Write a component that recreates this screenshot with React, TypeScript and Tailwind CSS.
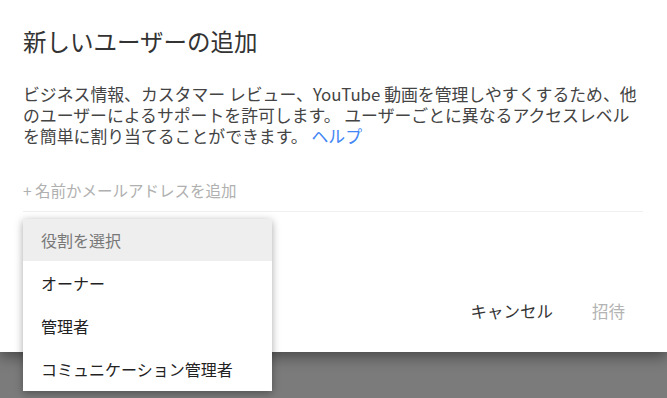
import React from "react";

export default function App() {
  const font = { fontFamily: "'Noto Sans CJK JP', 'Noto Sans', sans-serif" };
  return (
    <div className="relative h-[398px] w-[667px] overflow-hidden bg-[#7b7b7b]" style={font}>
      <div className="relative h-[352px] bg-white shadow-[0_4px_14px_rgba(0,0,0,0.45)]">
        <div className="pl-[23px] pr-[24px] pt-[24px]">
          <h1 className="text-[23.5px] leading-[34px] text-[#333] font-normal">新しいユーザーの追加</h1>
          <div className="mt-[25px] flex flex-col whitespace-nowrap text-[16.85px] leading-[21px] text-[#444]">
            <div className="h-[21px]">ビジネス情報、カスタマー レビュー、YouTube 動画を管理しやすくするため、他</div>
            <div className="h-[21px]">のユーザーによるサポートを許可します。 ユーザーごとに異なるアクセスレベル</div>
            <div className="h-[21px]">
              を簡単に割り当てることができます。 <span className="text-[#4285f4]">ヘルプ</span>
            </div>
          </div>
          <div className="mt-[34px] border-b border-[#efefef] pb-[11px] text-[15.5px] leading-[20px] text-[#b0b0b0]">
            + 名前かメールアドレスを追加
          </div>
        </div>
        <div className="mt-[88px] flex justify-end gap-[39px] pr-[42px] text-[16.5px] leading-[22px]">
          <span className="text-[#333]">キャンセル</span>
          <span className="text-[#b3b3b3]">招待</span>
        </div>
      </div>
      <div className="absolute left-[23px] top-[219px] w-[249px] bg-white shadow-[0_2px_8px_rgba(0,0,0,0.35)] text-[16px]">
        <div className="flex h-[42px] items-center bg-[#eeeeee] pl-[18px] text-[#777]">役割を選択</div>
        <div className="flex h-[43px] items-center pl-[18px] text-[#222]">オーナー</div>
        <div className="flex h-[43px] items-center pl-[18px] text-[#222]">管理者</div>
        <div className="flex h-[44px] items-center pl-[18px] text-[#222]">コミュニケーション管理者</div>
      </div>
    </div>
  );
}
